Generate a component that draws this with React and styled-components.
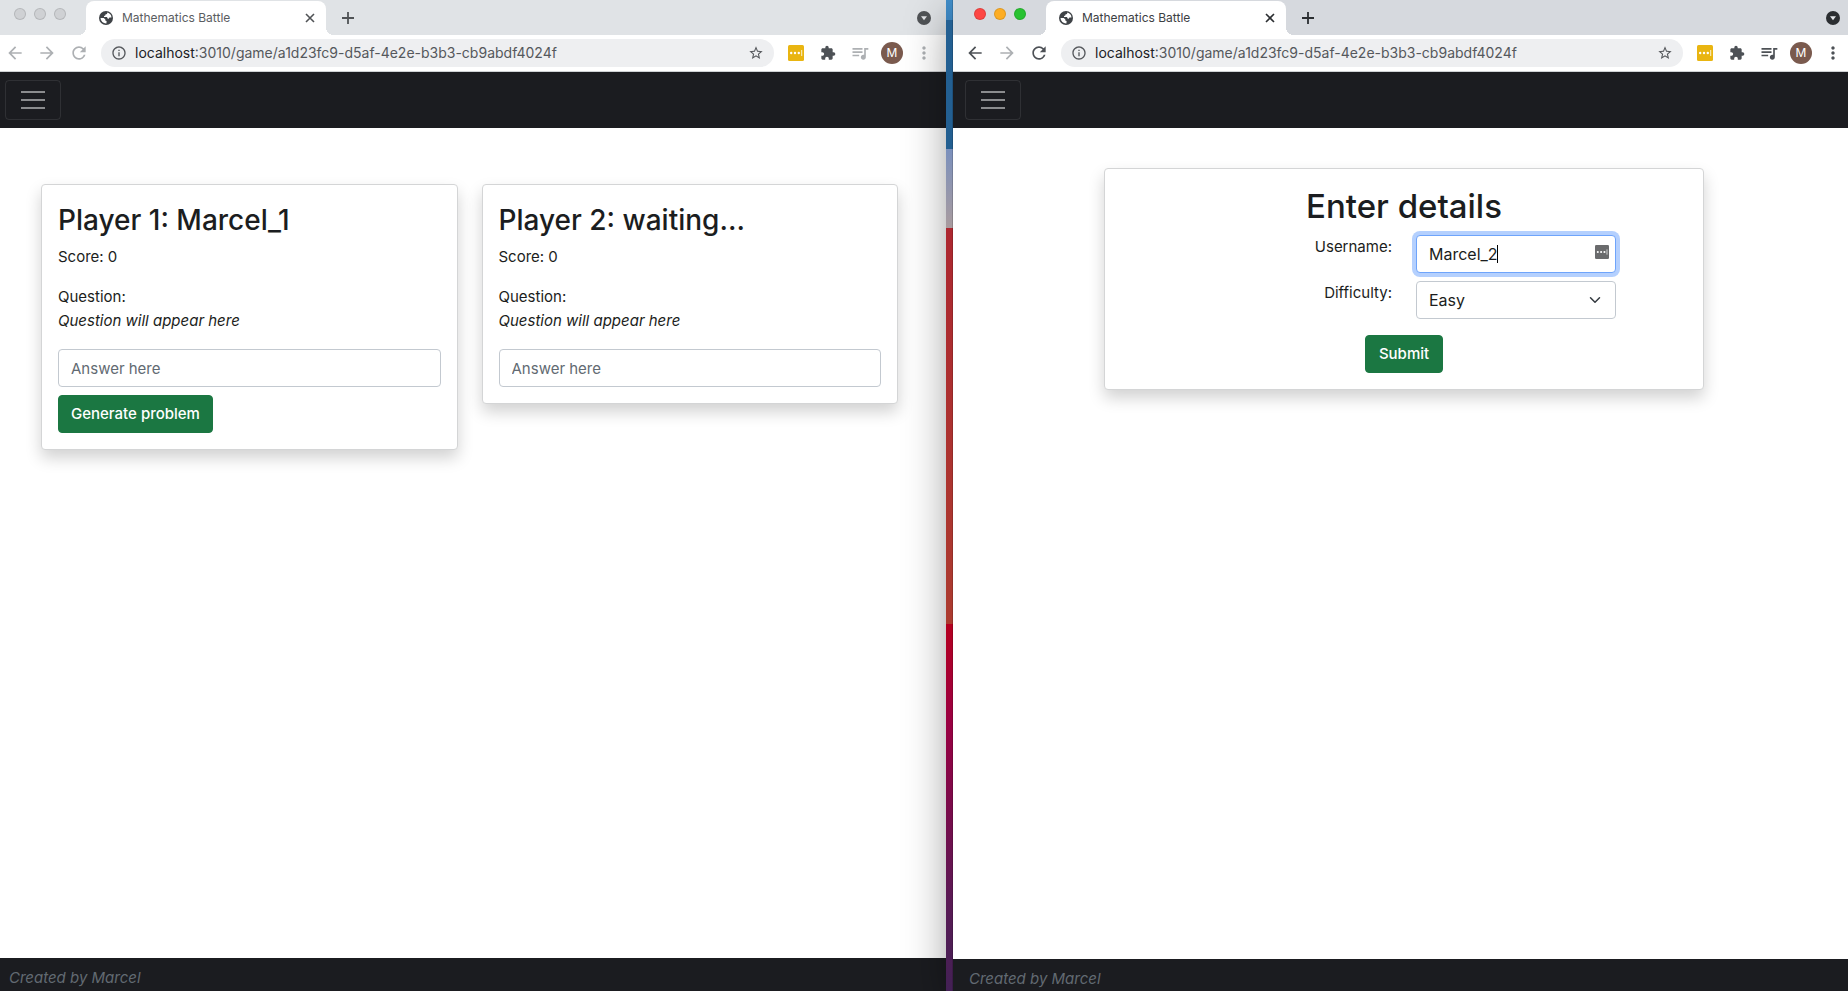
import React from "react";
import styled, { createGlobalStyle, css } from "styled-components";
import {
  MdArrowBack,
  MdArrowForward,
  MdRefresh,
  MdInfoOutline,
  MdStarBorder,
  MdExtension,
  MdQueueMusic,
  MdMoreVert,
} from "react-icons/md";

const Global = createGlobalStyle`
  *, *::before, *::after { box-sizing: border-box; }
  body {
    margin: 0;
    background: #fff;
    color: #1b1d20;
    font: 400 15px/24px Inter, "Liberation Sans", sans-serif;
  }
  button, input, select { font: inherit; color: inherit; margin: 0; }
`;

const Screen = styled.div`
  height: 100vh;
  overflow: hidden;
`;

const Desktop = styled.div`
  display: grid;
  grid-template-columns: 953fr 7px 902fr;
  height: 100%;
  margin: 0 -7px;
`;

const Wallpaper = styled.div`
  z-index: 2;
  border-right: 1px solid rgba(0, 0, 0, 0.15);
  background: linear-gradient(
    #3f8ac4 0%, #3a80b8 2%, #236093 2%, #235f91 15%,
    #7a90bd 15%, #a99b9e 23%,
    #ad2730 23%, #ac3b2f 63%,
    #b50020 63%, #9a0042 73%, #7c0a4a 81%, #5a1a55 91%, #432155 100%
  );
`;

const Window = styled.section`
  display: flex;
  flex-direction: column;
  min-width: 0;
  background: #fff;
  ${(p) =>
    p.$active &&
    css`
      z-index: 1;
      box-shadow: 0 16px 44px rgba(0, 0, 0, 0.48);
    `}
`;

const TabStrip = styled.div`
  display: flex;
  align-items: flex-end;
  height: 35px;
  padding: 0 14px 0 21px;
  background: ${(p) => (p.$active ? "#d6d9de" : "#e0e3e6")};
  color: ${(p) => (p.$active ? "#2b2e31" : "#505356")};
`;

const Lights = styled.div`
  display: flex;
  align-self: flex-start;
  gap: 8px;
  width: 72px;
  padding-top: 8px;
`;

const Light = styled.button`
  width: 12px;
  height: 12px;
  padding: 0;
  border: 1px solid rgba(0, 0, 0, 0.12);
  border-radius: 50%;
  background: ${(p) => p.$color};
`;

const Tab = styled.div`
  position: relative;
  display: flex;
  align-items: center;
  width: 240px;
  height: 34px;
  padding: 0 8px 0 13px;
  border-radius: 8px 8px 0 0;
  background: #fff;
  &::before, &::after {
    content: "";
    position: absolute;
    bottom: 0;
    width: 8px;
    height: 8px;
  }
  &::before {
    right: 100%;
    background: radial-gradient(circle at 0 0, transparent 8px, #fff 8px);
  }
  &::after {
    left: 100%;
    background: radial-gradient(circle at 100% 0, transparent 8px, #fff 8px);
  }
`;

const TabTitle = styled.span`
  flex: 1;
  margin-left: 9px;
  font-size: 12px;
  line-height: 16px;
  color: ${(p) => (p.$active ? "#3c4043" : "#5a5d61")};
`;

const StripButton = styled.button`
  display: grid;
  place-items: center;
  width: 16px;
  height: 34px;
  padding: 0;
  border: 0;
  background: none;
  ${(p) => p.$spaced && css`margin-left: 14px;`}
  ${(p) => p.$end && css`margin-left: auto;`}
`;

const Toolbar = styled.div`
  display: flex;
  align-items: center;
  gap: 4px;
  height: 37px;
  padding: 0 8px;
  border-bottom: 1px solid #cfd1d4;
`;

const ToolButton = styled.button`
  display: grid;
  place-items: center;
  flex: none;
  width: 28px;
  height: 28px;
  padding: 0;
  border: 0;
  background: none;
  color: ${(p) => (p.$dim ? "#adb0b3" : "#4d5156")};
`;

const Address = styled.div`
  display: flex;
  align-items: center;
  flex: 1;
  min-width: 0;
  height: 28px;
  margin: 0 4px;
  padding: 0 10px;
  border-radius: 14px;
  background: #eeeff1;
  font-size: 14px;
  line-height: 20px;
  color: #55585c;
`;

const Host = styled.label`
  margin-left: 8px;
  color: #202124;
`;

const AddressInput = styled.input`
  flex: 1;
  min-width: 0;
  padding: 0;
  border: 0;
  outline: 0;
  background: none;
`;

const Avatar = styled.span`
  display: grid;
  place-items: center;
  width: 22px;
  height: 22px;
  border-radius: 50%;
  background: #7a5a4e;
  color: #fff;
  font-size: 12px;
  line-height: 16px;
`;

const NavBar = styled.nav`
  flex: none;
  height: 56px;
  padding: 8px 12px;
  background: #1b1c20;
`;

const Toggler = styled.button`
  display: flex;
  flex-direction: column;
  align-items: center;
  justify-content: center;
  gap: 6px;
  width: 56px;
  height: 40px;
  padding: 0;
  border: 1px solid rgba(255, 255, 255, 0.09);
  border-radius: 4px;
  background: none;
  span {
    width: 24px;
    height: 2px;
    background: #8b8c8e;
  }
`;

const Main = styled.main`
  flex: 1;
  min-height: 0;
`;

const Players = styled.div`
  display: grid;
  grid-template-columns: 1fr 1fr;
  align-items: start;
  gap: 24px;
  padding: 56px 48px;
`;

const Card = styled.article`
  padding: 16px;
  border: 1px solid #d4d5d6;
  border-radius: 4px;
  background: #fff;
  box-shadow: 0 8px 16px rgba(0, 0, 0, 0.18);
`;

const PlayerName = styled.h2`
  margin: 0;
  padding-top: 1px;
  font-size: 28px;
  font-weight: 500;
  line-height: 36px;
`;

const Text = styled.p`
  margin: 0 0 16px;
  ${(p) => p.$first && css`margin-top: 7px;`}
`;

const fieldStyle = css`
  display: block;
  width: 100%;
  height: 38px;
  padding: 6px 12px;
  border: 1px solid #c3c9d0;
  border-radius: 4px;
  outline: 0;
  background: #fff;
  font-size: 16px;
`;

const Field = styled.input`
  ${fieldStyle}
  &::placeholder {
    color: #626a72;
    font-size: 15px;
    opacity: 1;
  }
  &:focus {
    border-color: #6ea4fb;
    box-shadow: 0 0 0 4px #b4d0fe;
    caret-color: transparent;
  }
`;

const Caret = styled.span`
  position: absolute;
  top: 10px;
  left: 81px;
  width: 1px;
  height: 18px;
  background: #000;
`;

const Select = styled.select`
  ${fieldStyle}
  appearance: none;
`;

const Button = styled.button`
  min-width: 78px;
  height: 38px;
  padding: 0 12px;
  border: 1px solid #1b7742;
  border-radius: 4px;
  background: #1b7742;
  color: #fff;
  font-weight: 500;
  ${(p) => p.$below && css`margin-top: 8px;`}
`;

const FormCard = styled(Card)`
  max-width: 600px;
  margin: 40px auto;
  text-align: center;
`;

const FormTitle = styled.h1`
  margin: 0 0 8px;
  font-size: 33px;
  font-weight: 500;
  line-height: 42px;
`;

const FormRows = styled.div`
  display: grid;
  grid-template-columns: 1fr 1fr;
  gap: 8px 24px;
  margin-bottom: 16px;
  text-align: right;
`;

const FieldBox = styled.div`
  position: relative;
  width: 200px;
  text-align: left;
  svg {
    position: absolute;
    top: ${(p) => p.$top};
    right: ${(p) => p.$right};
    pointer-events: none;
  }
`;

const Footer = styled.footer`
  flex: none;
  height: ${(p) => p.$height};
  padding: 8px 16px;
  overflow: hidden;
  background: #1b1c20;
  color: #626a72;
  font-style: italic;
`;

function Globe() {
  return (
    <svg width="14" height="14" viewBox="0 0 14 14" aria-hidden="true">
      <circle cx="7" cy="7" r="7" fill="#3f4347" />
      <path
        d="M8.4 1.6 8 3 6.4 3.4 6.3 4.6 5 4.9 5 6 8 6.1 8.6 7.5 9.8 7.7 10.4 6.6 12.5 6.4A5.6 5.6 0 0 0 8.4 1.6ZM1.5 7 4.8 7.1 6.4 8.4 6.2 9.6 7.6 10 7.4 12.4A5.6 5.6 0 0 1 1.5 7Z"
        fill="#fff"
      />
    </svg>
  );
}

function PasswordMark({ size, color }) {
  return (
    <svg width={size} height={size} viewBox="0 0 16 16" aria-hidden="true">
      <rect width="16" height="16" rx="1.5" fill={color} />
      <g fill="#fff">
        <circle cx="3.2" cy="8" r="1.2" />
        <circle cx="7" cy="8" r="1.2" />
        <circle cx="10.8" cy="8" r="1.2" />
        <rect x="13.2" y="5" width="1" height="6" opacity="0.8" />
      </g>
    </svg>
  );
}

function BrowserWindow({ id, active, footerHeight, children }) {
  const lights = active ? ["#fd4643", "#fdad24", "#28c231"] : ["#cfd1d4", "#cfd1d4", "#cfd1d4"];
  return (
    <Window $active={active}>
      <TabStrip $active={active}>
        <Lights>
          <Light $color={lights[0]} aria-label="Close window" />
          <Light $color={lights[1]} aria-label="Minimise window" />
          <Light $color={lights[2]} aria-label="Zoom window" />
        </Lights>
        <Tab>
          <Globe />
          <TabTitle $active={active}>Mathematics Battle</TabTitle>
          <StripButton aria-label="Close tab">
            <svg width="10" height="10" viewBox="0 0 10 10" stroke="currentColor" strokeWidth="1.6">
              <path d="M1 1l8 8M9 1l-8 8" />
            </svg>
          </StripButton>
        </Tab>
        <StripButton $spaced aria-label="New tab">
          <svg width="12" height="12" viewBox="0 0 12 12" stroke="currentColor" strokeWidth="1.8">
            <path d="M6 0v12M0 6h12" />
          </svg>
        </StripButton>
        <StripButton $end aria-label="Search tabs">
          <svg width="14" height="14" viewBox="0 0 14 14">
            <circle cx="7" cy="7" r="7" fill="currentColor" />
            <path d="M4 5.2h6L7 9.2z" fill="#e4e6e9" />
          </svg>
        </StripButton>
      </TabStrip>
      <Toolbar>
        <ToolButton $dim={!active} aria-label="Back"><MdArrowBack size={20} /></ToolButton>
        <ToolButton $dim aria-label="Forward"><MdArrowForward size={20} /></ToolButton>
        <ToolButton $dim={!active} aria-label="Reload"><MdRefresh size={20} /></ToolButton>
        <Address>
          <MdInfoOutline size={16} />
          <Host htmlFor={`address-${id}`}>localhost</Host>
          <AddressInput
            id={`address-${id}`}
            defaultValue=":3010/game/a1d23fc9-d5af-4e2e-b3b3-cb9abdf4024f"
          />
          <MdStarBorder size={16} />
        </Address>
        <ToolButton aria-label="Passwords"><PasswordMark size={16} color="#e9b511" /></ToolButton>
        <ToolButton aria-label="Extensions"><MdExtension size={16} /></ToolButton>
        <ToolButton $dim={!active} aria-label="Media"><MdQueueMusic size={20} /></ToolButton>
        <ToolButton aria-label="Profile"><Avatar>M</Avatar></ToolButton>
        <ToolButton $dim={!active} aria-label="Menu"><MdMoreVert size={20} /></ToolButton>
      </Toolbar>
      <NavBar>
        <Toggler aria-label="Toggle navigation">
          <span /><span /><span />
        </Toggler>
      </NavBar>
      <Main>{children}</Main>
      <Footer $height={footerHeight}>Created by Marcel</Footer>
    </Window>
  );
}

function PlayerCard({ name, children }) {
  return (
    <Card>
      <PlayerName>{name}</PlayerName>
      <Text $first>Score: 0</Text>
      <Text>
        Question:
        <br />
        <em>Question will appear here</em>
      </Text>
      <Field placeholder="Answer here" aria-label="Answer" />
      {children}
    </Card>
  );
}

export default function App() {
  return (
    <Screen>
      <Global />
      <Desktop>
        <BrowserWindow id="one" footerHeight="33px">
          <Players>
            <PlayerCard name="Player 1: Marcel_1">
              <Button $below>Generate problem</Button>
            </PlayerCard>
            <PlayerCard name="Player 2: waiting..." />
          </Players>
        </BrowserWindow>
        <Wallpaper />
        <BrowserWindow id="two" active footerHeight="32px">
          <FormCard as="form" onSubmit={(e) => e.preventDefault()}>
            <FormTitle>Enter details</FormTitle>
            <FormRows>
              <label htmlFor="username">Username:</label>
              <FieldBox $top="10px" $right="7px">
                <Field id="username" defaultValue="Marcel_2" autoFocus />
                <Caret />
                <PasswordMark size={14} color="#6a6b6d" />
              </FieldBox>
              <label htmlFor="difficulty">Difficulty:</label>
              <FieldBox $top="13px" $right="15px">
                <Select id="difficulty" defaultValue="Easy">
                  <option>Easy</option>
                  <option>Medium</option>
                  <option>Hard</option>
                </Select>
                <svg width="12" height="12" viewBox="0 0 16 16" fill="none" stroke="#343a40" strokeWidth="2" strokeLinecap="round" strokeLinejoin="round" aria-hidden="true">
                  <path d="m2 5 6 6 6-6" />
                </svg>
              </FieldBox>
            </FormRows>
            <Button type="submit">Submit</Button>
          </FormCard>
        </BrowserWindow>
      </Desktop>
    </Screen>
  );
}
